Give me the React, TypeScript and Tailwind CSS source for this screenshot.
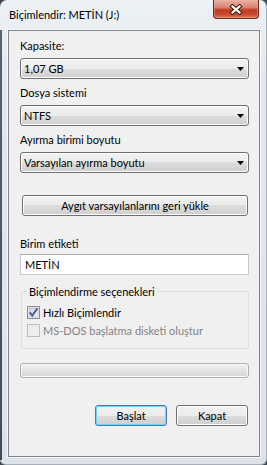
import React from "react";

const btn =
  "border border-[#707070] rounded-[3px] bg-[linear-gradient(#f2f2f2_0%,#ebebeb_50%,#dddddd_50%,#cfcfcf_100%)] shadow-[inset_0_0_0_1px_#fcfcfc]";

function Combo({ value }: { value: string }) {
  return (
    <div className={`mt-[5px] w-[229px] h-[21px] flex items-center pl-[3px] pr-[4px] ${btn}`}>
      <span className="flex-1">{value}</span>
      <svg width="7" height="4" viewBox="0 0 7 4">
        <path d="M0 0 H7 L3.5 4 Z" fill="#000" />
      </svg>
    </div>
  );
}

function Check({ checked, disabled }: { checked?: boolean; disabled?: boolean }) {
  return (
    <svg width="13" height="13" viewBox="0 0 13 13" className="shrink-0">
      <defs>
        <linearGradient id={disabled ? "cbd" : "cbn"} x1="0" y1="0" x2="1" y2="1">
          <stop offset="0" stopColor={disabled ? "#e6e6e6" : "#cbcfd5"} />
          <stop offset="1" stopColor={disabled ? "#f6f6f6" : "#f7f7f7"} />
        </linearGradient>
      </defs>
      <rect x="0.5" y="0.5" width="12" height="12" fill="#f4f4f4" stroke={disabled ? "#bcbdbc" : "#8e8f8f"} />
      <rect x="2" y="2" width="9" height="9" fill={`url(#${disabled ? "cbd" : "cbn"})`} stroke={disabled ? "#e0e0e0" : "#aeb3b9"} strokeWidth="0.6" />
      {checked && (
        <path d="M2.8 6.4 L5.3 9.6 L10.4 2.4" fill="none" stroke="#4a5e9c" strokeWidth="1.9" />
      )}
    </svg>
  );
}

export default function App() {
  return (
    <div className="w-[267px] h-[465px] overflow-hidden bg-[#3d4b59] font-['Lato',sans-serif] text-[11px] leading-[15px] text-black">
      <div className="w-[267px] h-[465px] flex flex-col rounded-t-[7px] rounded-b-[6px] border-r border-b border-[#a7b0b9] bg-[linear-gradient(#eef2f6,#e2e7ed_20%,#dde3e9)]">
        {/* Title bar */}
        <div className="h-[30px] flex shrink-0">
          <div className="pl-[9px] pt-[7px] whitespace-nowrap text-[11px]">Biçimlendir: METİN (J:)</div>
          <div className="ml-auto mr-[7px] w-[46px] h-[19px] flex items-center justify-center rounded-b-[4px] border border-t-0 border-[#6b2a1e] bg-[linear-gradient(#eab0a0_0%,#d98876_40%,#c33c22_55%,#c8472c_80%,#e07a5c_100%)] shadow-[inset_0_0_0_1px_#f0b8a866]">
            <svg width="14" height="11" viewBox="0 0 14 11">
              <path d="M3.5 2.5 L10.5 8.5 M10.5 2.5 L3.5 8.5" stroke="#3a1a12" strokeWidth="4.2" strokeLinecap="square" fill="none" />
              <path d="M3.5 2.5 L10.5 8.5 M10.5 2.5 L3.5 8.5" stroke="#ffffff" strokeWidth="2.3" strokeLinecap="square" fill="none" />
            </svg>
          </div>
        </div>
        {/* Body */}
        <div className="flex flex-1">
          <div className="w-[2px] h-[430px] bg-[linear-gradient(#55626f,#3f4c59)]" />
          <div className="w-[6px]" />
          <div className="w-[252px] h-[427px] border border-[#7d8792] bg-[#f0f0f0] shadow-[0_0_0_1px_#ffffffaa]">
            <div className="flex flex-col items-start pl-[11px] pt-[7px]">
              <div>Kapasite:</div>
              <Combo value="1,07 GB" />
              <div className="mt-[6px]">Dosya sistemi</div>
              <Combo value="NTFS" />
              <div className="mt-[6px]">Ayırma birimi boyutu</div>
              <Combo value="Varsayılan ayırma boyutu" />
              <button className={`mt-[22px] ml-[2px] w-[226px] h-[21px] flex items-center justify-center ${btn}`}>
                Aygıt varsayılanlarını geri yükle
              </button>
              <div className="mt-[20px]">Birim etiketi</div>
              <div className="mt-[3px] w-[229px] h-[21px] flex items-center pl-[4px] bg-white border border-[#c9ccd2] border-t-[#a9acb2]">
                METİN
              </div>
              <fieldset className="mt-[9px] ml-[1px] w-[228px] border border-[#d5dfe5] rounded-[3px] pl-[5px] pb-[10px]">
                <legend className="ml-[0px] px-[2px]">Biçimlendirme seçenekleri</legend>
                <div className="mt-[6px] h-[15px] flex items-center">
                  <Check checked />
                  <span className="ml-[3px]">Hızlı Biçimlendir</span>
                </div>
                <div className="mt-[3px] h-[15px] flex items-center">
                  <Check disabled />
                  <span className="ml-[3px] text-[#838383]">MS-DOS başlatma disketi oluştur</span>
                </div>
              </fieldset>
              <div className="mt-[14px] w-[229px] h-[15px] rounded-[3px] border border-[#b2b2b2] bg-[linear-gradient(#f3f3f3,#e2e2e2_50%,#d6d6d6)] shadow-[inset_0_0_0_1px_#f6f6f6]" />
              <div className="mt-[27px] w-[229px] flex justify-end gap-[9px] pr-[1px]">
                <button className="w-[72px] h-[21px] flex items-center justify-center rounded-[3px] border border-[#3c7fb1] bg-[linear-gradient(#f2f2f2_0%,#ebebeb_50%,#dddddd_50%,#cfcfcf_100%)] shadow-[inset_0_0_0_1px_#6fd3f7]">
                  Başlat
                </button>
                <button className={`w-[72px] h-[21px] flex items-center justify-center ${btn}`}>Kapat</button>
              </div>
            </div>
          </div>
        </div>
      </div>
    </div>
  );
}
